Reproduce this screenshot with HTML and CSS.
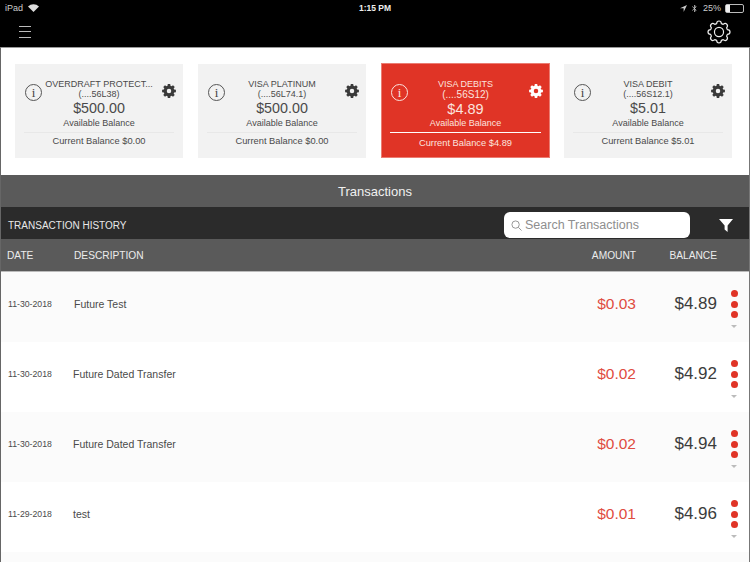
FILE: index.html
```html
<!DOCTYPE html>
<html lang="en">
  <head>
    <meta charset="utf-8" />
    <title>Transactions</title>
    <link rel="stylesheet" href="styles.css">
  </head>

  <body>
    <svg class="defs" width="0" height="0">
      <symbol id="gear" viewBox="0 0 24 24">
        <path fill-rule="evenodd" d="M10.18 1.66H13.82L14.2 4.31L15.88 5L18.02 3.4L20.6 5.98L19 8.12L19.69 9.8L22.34 10.18V13.82L19.69 14.2L19 15.88L20.6 18.02L18.02 20.6L15.88 19L14.2 19.69L13.82 22.34H10.18L9.8 19.69L8.12 19L5.98 20.6L3.4 18.02L5 15.88L4.31 14.2L1.66 13.82V10.18L4.31 9.8L5 8.12L3.4 5.98L5.98 3.4L8.12 5L9.8 4.31ZM12 8.6A3.4 3.4 0 1 0 12 15.4A3.4 3.4 0 1 0 12 8.6Z" />
      </symbol>
      <symbol id="gear-line" viewBox="0 0 24 24">
        <path d="M9.8 4.31C10 1 14 1 14.2 4.31L15.88 5C18.36 2.81 21.19 5.64 19 8.12L19.69 9.8C23 10 23 14 19.69 14.2L19 15.88C21.19 18.36 18.36 21.19 15.88 19L14.2 19.69C14 23 10 23 9.8 19.69L8.12 19C5.64 21.19 2.81 18.36 5 15.88L4.31 14.2C1 14 1 10 4.31 9.8L5 8.12C2.81 5.64 5.64 2.81 8.12 5Z" />
        <circle cx="12" cy="12" r="4.2" />
      </symbol>
    </svg>

    <header class="top">
      <div class="status-bar">
        <div class="status-left">
          <span>iPad</span>
          <svg class="wifi" viewBox="0 0 14 10">
            <path d="M7 10L0 3.2A10 10 0 0 1 14 3.2Z" />
          </svg>
        </div>
        <span class="status-time">1:15 PM</span>
        <div class="status-right">
          <svg class="locate" viewBox="0 0 10 10"><path d="M10 0L0 4.6H5.2V10Z" /></svg>
          <svg class="bluetooth" viewBox="0 0 6 10"><path d="M0.3 2.6L5 6.9L3 9V1L5 3.1L0.3 7.4" /></svg>
          <span>25%</span>
          <div class="battery"><div class="battery-level"></div></div>
        </div>
      </div>
      <div class="nav-bar">
        <div class="menu-icon"><span></span><span></span><span></span></div>
        <svg class="nav-gear"><use href="#gear-line" /></svg>
      </div>
    </header>

    <main class="page">
      <section class="cards">
        <div class="card">
          <div class="info-icon">i</div>
          <div class="card-body">
            <div class="card-title">OVERDRAFT PROTECT...<br />(....56L38)</div>
            <div class="card-amount">$500.00</div>
            <div class="card-label">Available Balance</div>
          </div>
          <svg class="card-gear"><use href="#gear" /></svg>
          <div class="card-current">Current Balance $0.00</div>
        </div>
        <div class="card">
          <div class="info-icon">i</div>
          <div class="card-body">
            <div class="card-title">VISA PLATINUM<br />(....56L74.1)</div>
            <div class="card-amount">$500.00</div>
            <div class="card-label">Available Balance</div>
          </div>
          <svg class="card-gear"><use href="#gear" /></svg>
          <div class="card-current">Current Balance $0.00</div>
        </div>
        <div class="card card-active">
          <div class="info-icon">i</div>
          <div class="card-body">
            <div class="card-title">VISA DEBITS<br /><span class="card-number">(....56S12)</span></div>
            <div class="card-amount">$4.89</div>
            <div class="card-label">Available Balance</div>
          </div>
          <svg class="card-gear"><use href="#gear" /></svg>
          <div class="card-current">Current Balance $4.89</div>
        </div>
        <div class="card">
          <div class="info-icon">i</div>
          <div class="card-body">
            <div class="card-title">VISA DEBIT<br />(....56S12.1)</div>
            <div class="card-amount">$5.01</div>
            <div class="card-label">Available Balance</div>
          </div>
          <svg class="card-gear"><use href="#gear" /></svg>
          <div class="card-current">Current Balance $5.01</div>
        </div>
      </section>

      <h2 class="section-title">Transactions</h2>

      <div class="toolbar">
        <span class="toolbar-title">TRANSACTION HISTORY</span>
        <div class="search">
          <svg class="search-icon" viewBox="0 0 12 12">
            <circle cx="5" cy="5" r="4" />
            <path d="M8 8L11.5 11.5" />
          </svg>
          <span>Search Transactions</span>
        </div>
        <svg class="filter-icon" viewBox="0 0 14 13">
          <path d="M0 0H14L8.6 6.4V13L5.6 10.6V6.4Z" />
        </svg>
      </div>

      <div class="row row-head">
        <span>DATE</span>
        <span class="head-desc">DESCRIPTION</span>
        <span class="num">AMOUNT</span>
        <span class="num">BALANCE</span>
        <span></span>
      </div>

      <div class="row">
        <span class="date">11-30-2018</span>
        <span class="desc desc-first">Future Test</span>
        <span class="num amount">$0.03</span>
        <span class="num balance">$4.89</span>
        <div class="actions"><i></i><i></i><i></i><b></b></div>
      </div>
      <div class="row">
        <span class="date">11-30-2018</span>
        <span class="desc">Future Dated Transfer</span>
        <span class="num amount">$0.02</span>
        <span class="num balance">$4.92</span>
        <div class="actions"><i></i><i></i><i></i><b></b></div>
      </div>
      <div class="row">
        <span class="date">11-30-2018</span>
        <span class="desc">Future Dated Transfer</span>
        <span class="num amount">$0.02</span>
        <span class="num balance">$4.94</span>
        <div class="actions"><i></i><i></i><i></i><b></b></div>
      </div>
      <div class="row">
        <span class="date">11-29-2018</span>
        <span class="desc">test</span>
        <span class="num amount">$0.01</span>
        <span class="num balance">$4.96</span>
        <div class="actions"><i></i><i></i><i></i><b></b></div>
      </div>
      <div class="row"></div>
    </main>
  </body>
</html>
```

FILE: styles.css
```css
body {
  margin: 0;
  height: 562px;
  overflow: hidden;
  background: #fff;
  color: #4a4a4a;
  font-family: "Liberation Sans", Arial, sans-serif;
}

.defs {
  display: block;
  height: 0;
}

.top {
  background: #000;
  color: #ccc;
  height: 47px;
}

.status-bar {
  display: flex;
  align-items: center;
  justify-content: space-between;
  height: 16px;
  padding: 0 5px;
  font-size: 9px;
}

.status-left,
.status-right {
  display: flex;
  align-items: center;
  gap: 5px;
  width: 120px;
}

.status-right {
  justify-content: flex-end;
  gap: 4px;
}

.status-time {
  color: #eee;
  font-weight: bold;
  font-size: 8.5px;
}

.wifi {
  width: 11px;
  height: 8px;
  fill: #ddd;
}

.locate {
  width: 7px;
  height: 7px;
  fill: #ccc;
}

.bluetooth {
  width: 5px;
  height: 9px;
  fill: none;
  stroke: #ccc;
  stroke-width: 0.9;
  margin: 0 2px 0 1px;
}

.battery {
  width: 17px;
  height: 7px;
  border: 1px solid #bbb;
  border-radius: 2px;
  margin-right: 1px;
}

.battery-level {
  width: 4px;
  height: 7px;
  background: #eee;
}

.nav-bar {
  display: flex;
  align-items: center;
  justify-content: space-between;
  height: 31px;
  padding: 0 18px 0 19px;
}

.menu-icon {
  display: flex;
  flex-direction: column;
  gap: 4.5px;
  width: 12px;
}

.menu-icon span {
  height: 1px;
  background: #bbb;
}

.nav-gear {
  width: 26px;
  height: 26px;
  fill: none;
  stroke: #eee;
  stroke-width: 1.1;
  stroke-linejoin: round;
}

.page {
  height: 515px;
  overflow: hidden;
  border-left: 1px solid #666;
  border-right: 1px solid #777;
  border-top: 1px solid #999;
  box-sizing: border-box;
}

.cards {
  display: flex;
  gap: 15px;
  height: 127px;
  padding: 16px 16px 0 14px;
  box-sizing: border-box;
}

.card {
  display: grid;
  grid-template-columns: 36px 1fr 36px;
  grid-template-rows: 68px 26px;
  width: 168px;
  height: 94px;
  background: #f2f2f2;
  text-align: center;
}

.info-icon {
  width: 15px;
  height: 15px;
  margin: 20px 0 0 10px;
  border: 1px solid #555;
  border-radius: 50%;
  font: 13px/15px "Liberation Serif", serif;
  color: #444;
}

.card-body {
  padding-top: 15px;
  white-space: nowrap;
}

.card-title {
  font-size: 9px;
  line-height: 10px;
  margin: 0 -12px;
}

.card-amount {
  font-size: 14.3px;
  line-height: 18px;
}

.card-label {
  font-size: 9px;
  line-height: 12px;
}

.card-gear {
  width: 16px;
  height: 16px;
  margin: 19px 0 0 14px;
  fill: #3a3a3a;
}

.card-current {
  grid-column: 1 / 4;
  margin: 0 9px;
  border-top: 1px solid #e8e8e8;
  font-size: 9.3px;
  line-height: 17px;
}

.card-active {
  background: #e03426;
  color: #fbe3df;
  outline: 1px solid #eb7c72;
  outline-offset: -1px;
  height: 95px;
  margin-top: -1px;
  width: 169px;
  margin-right: -1px;
}

.card-active .card-body {
  padding-top: 16px;
}

.card-active .card-title {
  line-height: 10.5px;
}

.card-active .card-number {
  font-size: 10px;
}

.card-active .card-amount {
  font-size: 14.5px;
  line-height: 19px;
}

.card-active .card-label {
  margin-top: -2px;
}

.card-active .card-gear {
  fill: #fff;
  margin-top: 20px;
}

.card-active .info-icon {
  color: #fbe3df;
  border-color: #fbe3df;
  margin-top: 21px;
}

.card-active .card-current {
  border-top-color: #fff;
  margin-top: 1px;
  line-height: 21px;
}

.section-title {
  margin: 0;
  height: 32px;
  background: #5a5a5a;
  color: #f0f0f0;
  font-size: 13px;
  font-weight: normal;
  line-height: 33px;
  text-align: center;
}

.toolbar {
  display: flex;
  align-items: center;
  height: 32px;
  padding: 4px 16px 0 7px;
  box-sizing: border-box;
  background: #2b2b2b;
  color: #e8e8e8;
  font-size: 10px;
}

.toolbar-title {
  flex: 1;
}

.search {
  display: flex;
  align-items: center;
  gap: 3px;
  width: 186px;
  height: 26px;
  margin-right: 29px;
  padding-left: 7px;
  box-sizing: border-box;
  background: #fff;
  border-radius: 6px;
  color: #8e8e8e;
  font-size: 12.5px;
}

.search-icon {
  width: 11px;
  height: 11px;
  fill: none;
  stroke: #8e8e8e;
  stroke-width: 1;
}

.filter-icon {
  width: 14px;
  height: 13px;
  fill: #fff;
}

.row {
  display: grid;
  grid-template-columns: 66px 1fr 90px 81px 32px;
  align-items: center;
  height: 70px;
  padding: 0 0 6px 7px;
  box-sizing: border-box;
  font-size: 10.2px;
  background: #fff;
}

.row:nth-child(odd) {
  background: #fbfbfb;
}

.row-head {
  height: 33px;
  padding: 0 0 0 6px;
  background: #5a5a5a !important;
  color: #ececec;
  border-bottom: 1px solid #bbb;
}

.head-desc {
  margin-left: 1px;
}

.num {
  text-align: right;
}

.date {
  font-size: 8.7px;
}

.desc {
  font-size: 10.5px;
  margin-left: -1px;
}

.desc-first {
  margin-left: 0;
}

.amount {
  color: #df4c40;
  font-size: 15.5px;
}

.balance {
  color: #3c3c3c;
  font-size: 17px;
}

.actions {
  display: flex;
  flex-direction: column;
  align-items: center;
  gap: 3.5px;
  margin-left: 2px;
  padding-top: 10px;
}

.actions i {
  width: 7px;
  height: 7px;
  border-radius: 50%;
  background: #e03426;
}

.actions b {
  width: 0;
  height: 0;
  margin-top: 3px;
  border-left: 3px solid transparent;
  border-right: 3px solid transparent;
  border-top: 3px solid #bbb;
}
```
